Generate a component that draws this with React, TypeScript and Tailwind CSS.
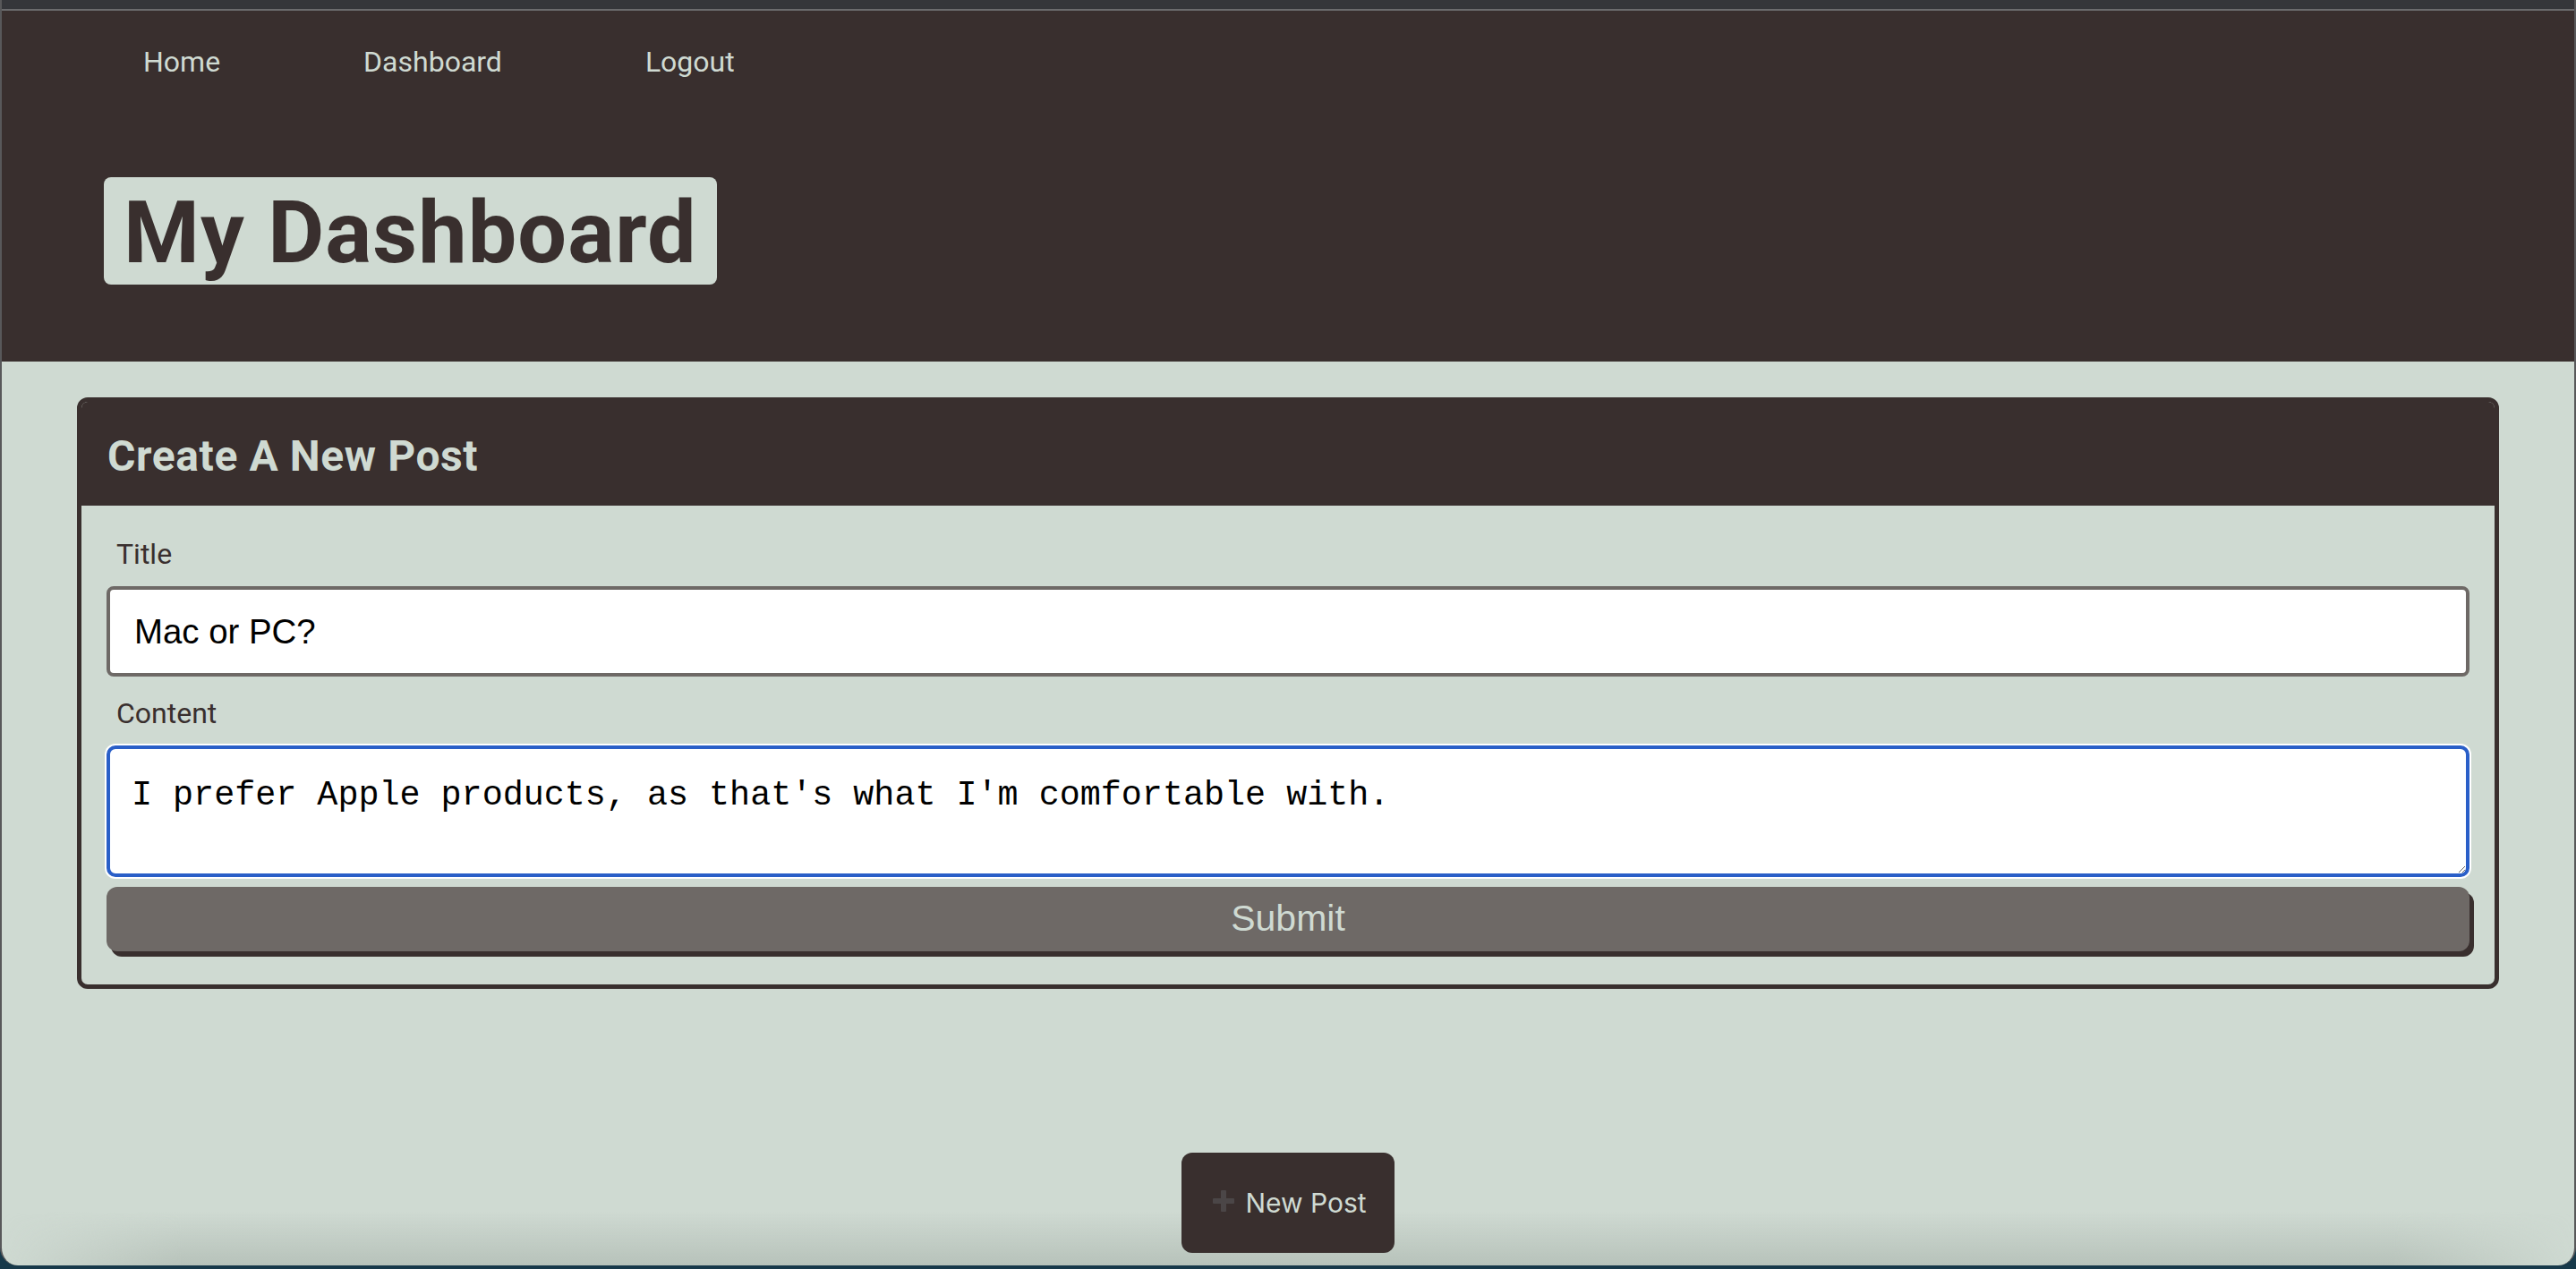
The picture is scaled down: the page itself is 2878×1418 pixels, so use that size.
export default function App() {
  const links = ['Home', 'Dashboard', 'Logout'];

  return (
    <div className="w-[2878px] h-[1418px] bg-[#17394a] overflow-hidden font-['Roboto',sans-serif]">
      <div className="relative h-[1414px] flex flex-col bg-[#cfdad2] border-x-2 border-[#58585a] rounded-b-[20px] overflow-hidden">
        {/* window chrome strip */}
        <div className="h-[10px] bg-[#35363a]" />
        <div className="h-[2px] bg-[#6b6b6d]" />

        <header className="h-[392px] bg-[#392f2e] pt-[33px]">
          <nav className="flex gap-[160px] pl-[158px]">
            {links.map((link) => (
              <a key={link} className="text-[32px] leading-[48px] text-[#cfdad2]">
                {link}
              </a>
            ))}
          </nav>
          <div className="mt-[105px] ml-[114px] inline-flex items-center h-[120px] px-[22px] pt-[4px] bg-[#cfdad2] rounded-[8px]">
            <h1 className="text-[97px] leading-none font-bold tracking-[1.1px] text-[#392f2e]">My Dashboard</h1>
          </div>
        </header>

        <main className="px-[84px] mt-[40px]">
          <section className="border-[5px] border-[#392f2e] rounded-[12px] overflow-hidden">
            <div className="h-[116px] bg-[#392f2e] flex items-center px-[29px] pt-[5px]">
              <h2 className="text-[48px] leading-none font-bold tracking-[0.6px] text-[#cfdad2]">Create A New Post</h2>
            </div>
            <form className="flex flex-col px-[28px] pt-[30px] pb-[37px]">
              <label className="ml-[11px] text-[32px] leading-[48px] text-[#392f2e]">Title</label>
              <input
                readOnly
                value="Mac or PC?"
                className="mt-[12px] h-[101px] bg-white border-4 border-[#6e6966] rounded-[8px] px-[27px] text-[38.4px] text-black font-['Liberation_Sans',Arial,sans-serif] outline-none"
              />
              <label className="mt-[17px] ml-[11px] text-[32px] leading-[48px] text-[#392f2e]">Content</label>
              <textarea
                readOnly
                value="I prefer Apple products, as that's what I'm comfortable with."
                className="mt-[12px] h-[147px] bg-white border-4 border-[#2a5fc8] rounded-[10px] ring-2 ring-white px-[24px] pt-[29px] pb-[10px] text-[38.4px] leading-[1.2] text-black font-['Liberation_Mono','Courier_New',monospace] outline-none resize-y"
              />
              <button
                type="button"
                className="mt-[11px] h-[72px] bg-[#6e6966] rounded-[12px] shadow-[5px_6px_0_#392f2e] text-[41px] text-[#cfdad2] font-['Liberation_Sans',Arial,sans-serif]"
              >
                Submit
              </button>
            </form>
          </section>
        </main>

        <div className="flex-1 flex items-end justify-center pb-[14px] relative z-10">
          <button
            type="button"
            className="w-[238px] h-[112px] flex items-center justify-center gap-[12px] pl-[4px] bg-[#392f2e] rounded-[12px] text-[30px] text-[#cfdad2] font-['Inter',sans-serif]"
          >
            <svg width="24" height="24" viewBox="0 0 24 24" className="mt-[-4px]">
              <rect x="9" y="0" width="6" height="24" rx="1" fill="#4b4647" />
              <rect x="0" y="9" width="24" height="6" rx="1" fill="#4b4647" />
            </svg>
            New Post
          </button>
        </div>

        {/* bottom shadow */}
        <div className="absolute bottom-0 inset-x-0 h-[60px] bg-gradient-to-b from-transparent to-[#b7c2ba] [mask-image:linear-gradient(to_right,transparent,black_7%,black_93%,transparent)]" />
      </div>
    </div>
  );
}
